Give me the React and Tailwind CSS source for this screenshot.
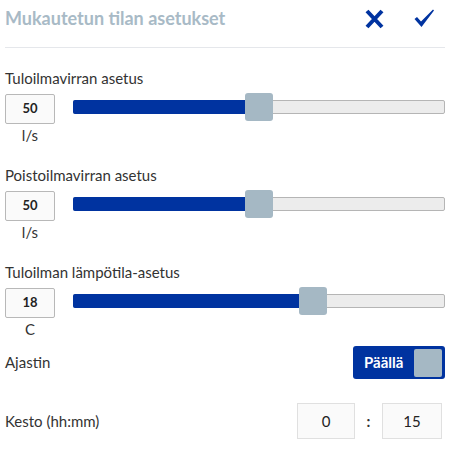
import React from 'react';

const font = { fontFamily: 'Lato, "Noto Sans", sans-serif' };

const Slider = ({ pct }) => {
  // thumb 28px, fill runs to the thumb centre
  const left = `calc((100% - 28px) * ${pct})`;
  const fill = `calc((100% - 28px) * ${pct} + 14px)`;
  return (
    <div className="relative flex-1 h-[28px] ml-[18px] mt-[-1px]">
      <div className="absolute left-0 right-0 top-[7px] h-[14px] bg-[#ececec] border border-[#b5b5b5] rounded-[2px]" />
      <div
        className="absolute left-0 top-[7px] h-[14px] bg-[#0033a0] rounded-l-[2px]"
        style={{ width: fill }}
      />
      <div
        className="absolute top-0 w-[28px] h-[28px] bg-[#a5b8c4] rounded-[3px]"
        style={{ left }}
      />
    </div>
  );
};

const Setting = ({ label, value, unit, pct, className }) => (
  <div className={className}>
    <div className="text-[15px] leading-[20px] text-[#333]">{label}</div>
    <div className="flex items-start mt-[6px]">
      <div className="flex flex-col items-center w-[50px]">
        <div className="w-[50px] h-[30px] border border-[#b8b8b8] bg-[#fafafa] rounded-[2px] flex items-center justify-center text-[13px] font-bold text-[#222]">
          {value}
        </div>
        <div className="mt-[1px] text-[15px] leading-[20px] text-[#333]">{unit}</div>
      </div>
      <Slider pct={pct} />
    </div>
  </div>
);

export default function App() {
  return (
    <div className="w-[451px] h-[450px] bg-white pl-[5px] pr-[6px]" style={font}>
      <div className="h-[48px] flex items-center justify-between border-b border-[#e5e7eb] pb-[10px]">
        <div className="text-[18px] font-bold text-[#a8bac6]">Mukautetun tilan asetukset</div>
        <div className="flex items-center gap-[28px] mr-[10px]">
          <svg width="21" height="20" viewBox="0 0 21 20">
            <path d="M3 2 L18 18 M18 2 L3 18" stroke="#0033a0" strokeWidth="4" fill="none" />
          </svg>
          <svg width="22" height="21" viewBox="0 0 22 21">
            <path d="M1.5 11 L4 9 L8 13.5 L20 1.5 L21 2.5 L8.5 19 Z" fill="#0033a0" />
          </svg>
        </div>
      </div>

      <Setting className="mt-[20px]" label="Tuloilmavirran asetus" value="50" unit="l/s" pct={0.5} />
      <Setting className="mt-[20px]" label="Poistoilmavirran asetus" value="50" unit="l/s" pct={0.5} />
      <Setting className="mt-[20px]" label="Tuloilman lämpötila-asetus" value="18" unit="C" pct={0.657} />

      <div className="flex items-center justify-between mt-[7px] h-[33px]">
        <div className="text-[15px] text-[#333]">Ajastin</div>
        <div className="w-[92px] h-[33px] bg-[#0033a0] rounded-[3px] flex items-center justify-between pl-[11px] pr-[3px]">
          <span className="text-[15px] font-bold text-white">Päällä</span>
          <div className="w-[28px] h-[28px] bg-[#a5b8c4] rounded-[2px]" />
        </div>
      </div>

      <div className="flex items-center justify-between mt-[24px] h-[36px]">
        <div className="text-[15px] text-[#333]">Kesto (hh:mm)</div>
        <div className="flex items-center mr-[3px]">
          <div className="w-[58px] h-[36px] border border-[#e0e0e0] bg-[#fafafa] flex items-center justify-center text-[15px] text-[#222]">0</div>
          <div className="w-[27px] text-center text-[15px] font-bold text-[#333]">:</div>
          <div className="w-[60px] h-[36px] border border-[#e0e0e0] bg-[#fafafa] flex items-center justify-center text-[15px] text-[#222]">15</div>
        </div>
      </div>
    </div>
  );
}
